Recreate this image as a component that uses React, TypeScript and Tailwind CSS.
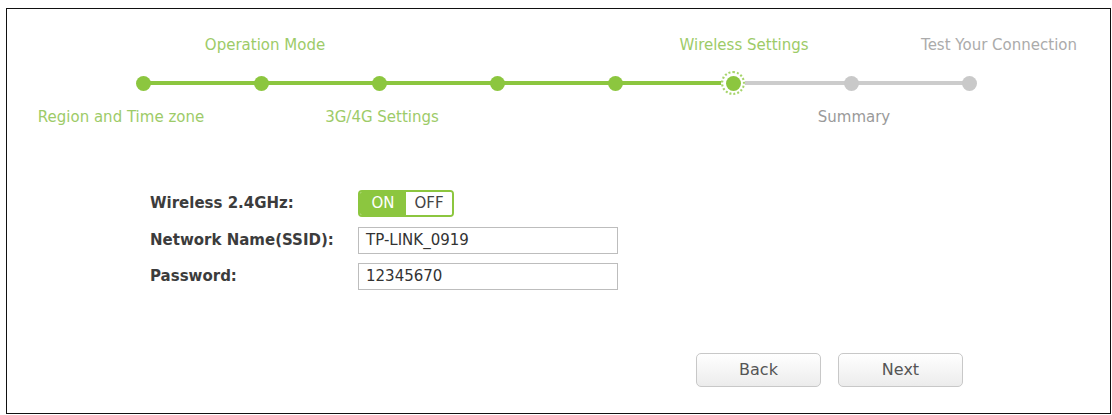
import React from "react";

type Step = { top?: string; bottom?: string; shift?: string; state: "done" | "active" | "todo" };

const steps: Step[] = [
  { bottom: "Region and Time zone", shift: "-translate-x-[22px]", state: "done" },
  { top: "Operation Mode", shift: "translate-x-[4px]", state: "done" },
  { bottom: "3G/4G Settings", shift: "translate-x-[3px]", state: "done" },
  { state: "done" },
  { state: "done" },
  { top: "Wireless Settings", shift: "translate-x-[11px]", state: "active" },
  { bottom: "Summary", shift: "translate-x-[3px]", state: "todo" },
  { top: "Test Your Connection", shift: "translate-x-[30px]", state: "todo" },
];

function Dot({ state }: { state: Step["state"] }) {
  if (state === "active") {
    return (
      <div className="relative z-10 w-[24px] h-[24px] rounded-full border-2 border-dotted border-[#a6d46a] bg-white flex items-center justify-center">
        <div className="w-[15px] h-[15px] rounded-full bg-[#8cc63f]" />
      </div>
    );
  }
  return (
    <div
      className={
        "relative z-10 w-[15px] h-[15px] rounded-full " +
        (state === "done" ? "bg-[#8cc63f]" : "bg-[#c9c9c9]")
      }
    />
  );
}

function Stepper() {
  return (
    <div className="flex ml-[77px] pt-[26px]">
      {steps.map((s, i) => {
        const leftColor = i === 0 ? "" : i <= 5 ? "bg-[#8cc63f]" : "bg-[#cccccc]";
        const rightColor = i === steps.length - 1 ? "" : i < 5 ? "bg-[#8cc63f]" : "bg-[#cccccc]";
        const labelColor =
          s.state === "todo" ? (s.top ? "text-[#ababab]" : "text-[#9a9a9a]") : "text-[#9dcb68]";
        return (
          <div key={i} className="w-[118px] flex flex-col items-center">
            <div className={"h-[20px] leading-[20px] whitespace-nowrap " + labelColor + " " + (s.shift || "")}>
              {s.top || ""}
            </div>
            <div className="h-[24px] w-full mt-[16px] flex items-center justify-center relative">
              <div className="absolute left-0 right-0 top-[10px] h-[4px] flex">
                <div className={"flex-1 " + leftColor} />
                <div className={"flex-1 " + rightColor} />
              </div>
              <Dot state={s.state} />
            </div>
            <div className={"h-[20px] leading-[20px] mt-[12px] whitespace-nowrap " + labelColor + " " + (s.shift || "")}>
              {s.bottom || ""}
            </div>
          </div>
        );
      })}
    </div>
  );
}

function Form() {
  return (
    <div className="ml-[143px] mt-[63px] flex flex-col">
      <div className="flex items-center h-[27px]">
        <div className="w-[208px] font-bold text-[#3c3c3c]">Wireless 2.4GHz:</div>
        <div className="flex h-[27px] w-[96px] rounded-[4px] border-2 border-[#8cc63f] overflow-hidden">
          <div className="w-[46px] bg-[#8cc63f] text-white flex items-center justify-center text-[15px]">ON</div>
          <div className="flex-1 bg-white text-[#444] flex items-center justify-center text-[15px]">OFF</div>
        </div>
      </div>
      <div className="flex items-center h-[27px] mt-[10px]">
        <div className="w-[208px] font-bold text-[#3c3c3c]">Network Name(SSID):</div>
        <div className="w-[260px] h-[27px] border border-[#bdbdbd] flex items-center pl-[7px] text-[#333] text-[15px]">
          TP-LINK_0919
        </div>
      </div>
      <div className="flex items-center h-[27px] mt-[9px]">
        <div className="w-[208px] font-bold text-[#3c3c3c]">Password:</div>
        <div className="w-[260px] h-[27px] border border-[#bdbdbd] flex items-center pl-[7px] text-[#333] text-[15px]">
          12345670
        </div>
      </div>
    </div>
  );
}

function Buttons() {
  return (
    <div className="flex ml-[689px] mt-[63px] gap-[17px]">
      {["Back", "Next"].map((b) => (
        <div
          key={b}
          className="w-[125px] h-[34px] rounded-[5px] border border-[#c8c8c8] bg-gradient-to-b from-white to-[#ececec] flex items-center justify-center text-[#555] text-[16px]"
        >
          {b}
        </div>
      ))}
    </div>
  );
}

export default function App() {
  return (
    <div
      className="w-[1112px] h-[415px] bg-white pt-[8px] pl-[6px] text-[15px]"
      style={{ fontFamily: '"DejaVu Sans", Verdana, sans-serif' }}
    >
      <div className="w-[1105px] h-[406px] border border-[#111]">
        <Stepper />
        <Form />
        <Buttons />
      </div>
    </div>
  );
}
